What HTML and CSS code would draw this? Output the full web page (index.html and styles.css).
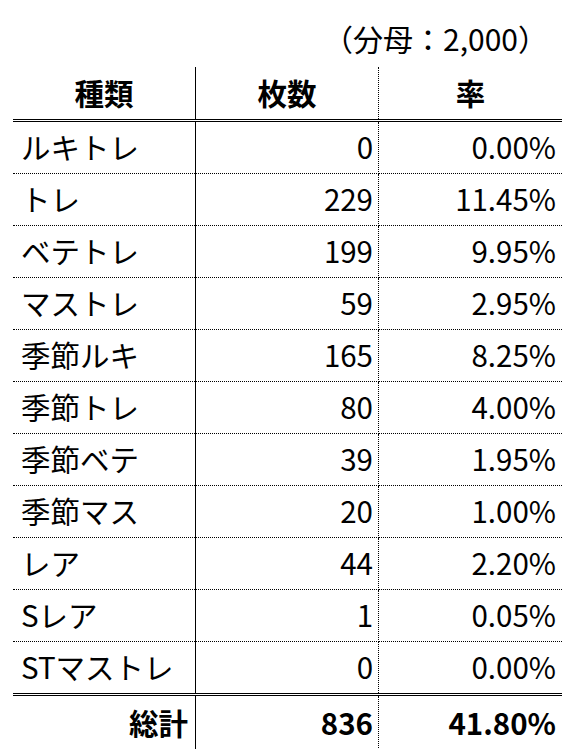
FILE: index.html
```html
<!DOCTYPE html>
<html lang="ja">
<head>
<meta charset="utf-8">
<link rel="stylesheet" href="styles.css">
</head>
<body>
<div class="sheet">
  <div class="caption">（分母：2,000）</div>
  <table class="stats">
    <thead>
      <tr><th class="c1">種類</th><th class="c2">枚数</th><th class="c3">率</th></tr>
    </thead>
    <tbody>
      <tr><td class="c1">ルキトレ</td><td class="c2">0</td><td class="c3">0.00%</td></tr>
      <tr><td class="c1">トレ</td><td class="c2">229</td><td class="c3">11.45%</td></tr>
      <tr><td class="c1">ベテトレ</td><td class="c2">199</td><td class="c3">9.95%</td></tr>
      <tr><td class="c1">マストレ</td><td class="c2">59</td><td class="c3">2.95%</td></tr>
      <tr><td class="c1">季節ルキ</td><td class="c2">165</td><td class="c3">8.25%</td></tr>
      <tr><td class="c1">季節トレ</td><td class="c2">80</td><td class="c3">4.00%</td></tr>
      <tr><td class="c1">季節ベテ</td><td class="c2">39</td><td class="c3">1.95%</td></tr>
      <tr><td class="c1">季節マス</td><td class="c2">20</td><td class="c3">1.00%</td></tr>
      <tr><td class="c1">レア</td><td class="c2">44</td><td class="c3">2.20%</td></tr>
      <tr><td class="c1">Sレア</td><td class="c2">1</td><td class="c3">0.05%</td></tr>
      <tr class="last"><td class="c1">STマストレ</td><td class="c2">0</td><td class="c3">0.00%</td></tr>
    </tbody>
    <tfoot>
      <tr><td class="c1 total-label">総計</td><td class="c2">836</td><td class="c3">41.80%</td></tr>
    </tfoot>
  </table>
</div>
</body>
</html>
```
FILE: styles.css
```css
html, body {
  margin: 0;
  padding: 0;
  background: #fff;
}
body {
  font-family: "Noto Sans CJK JP", "Noto Sans", sans-serif;
  color: #000;
  overflow: hidden;
}
.sheet {
  width: 573px;
  height: 749px;
  padding-left: 13px;
  box-sizing: border-box;
}
.caption {
  width: 547px;
  height: 67px;
  box-sizing: border-box;
  padding-top: 19px;
  padding-right: 12px;
  text-align: right;
  font-size: 30px;
  line-height: 38px;
}
.stats {
  border-collapse: collapse;
  table-layout: fixed;
  width: 547px;
  font-size: 29.5px;
}
.stats th, .stats td {
  padding: 0 0 3px 0;
  height: 48px;
  line-height: 48px;
  white-space: nowrap;
  overflow: hidden;
}
.stats .c1 { width: 182px; border-right: 1px solid #000; }
.stats .c2 { width: 182px; border-right: 1px dotted #000; }
.stats .c3 { width: 183px; }
.stats th {
  font-weight: bold;
  text-align: center;
  height: 49px;
  border-bottom: 3px double #000;
}
.stats tbody td {
  border-bottom: 1px dotted #000;
}
.stats tbody tr.last td {
  border-bottom: 3px double #000;
}
.stats td.c1 {
  text-align: left;
  padding-left: 8px;
}
.stats td.c2 {
  text-align: right;
  padding-right: 5px;
}
.stats td.c3 {
  text-align: right;
  padding-right: 6px;
}
.stats tfoot td {
  font-weight: bold;
  height: 51px;
  line-height: 48px;
}
.stats tfoot td.total-label {
  text-align: right;
  padding-left: 0;
  padding-right: 7px;
}
```
